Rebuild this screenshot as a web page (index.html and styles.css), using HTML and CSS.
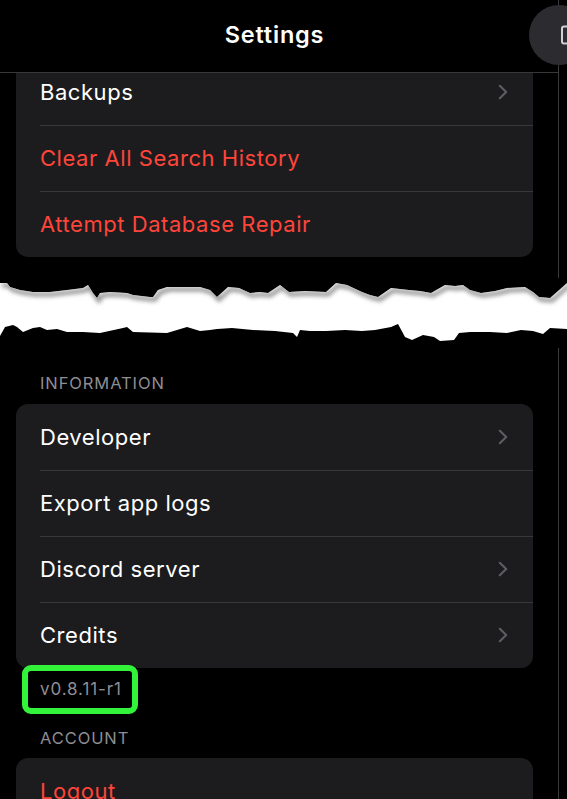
FILE: index.html
```html
<!DOCTYPE html>
<html lang="en">
<head>
<meta charset="utf-8">
<title>Settings</title>
<link rel="stylesheet" href="styles.css">
</head>
<body>
<div class="page">
  <div class="pane pane-top">
    <header class="navbar"><h1 class="title">Settings</h1></header>
    <div class="scroll">
      <div class="card card-first">
        <div class="row"><span class="label">Backups</span><svg class="chev" viewBox="0 0 10 16"><path d="M1.8 1.8 L8.2 8 L1.8 14.2"/></svg></div>
        <div class="row"><span class="label danger">Clear All Search History</span></div>
        <div class="row"><span class="label danger">Attempt Database Repair</span></div>
      </div>
    </div>
  </div>

  <svg class="torn" viewBox="0 0 567 70" preserveAspectRatio="none">
    <defs>
      <clipPath id="paper">
        <path id="paperShape" d="M0 5 L7 5 L10 9 L20 12 L33 14 L50 14 L67 12 L83 10 L88 7 L93 15 L97 20 L100 15 L110 14 L127 15 L133 17 L150 19 L153 19 L158 12 L167 9 L187 9 L200 9 L210 12 L217 19 L228 9 L239 10 L250 15 L260 14 L268 15 L280 7 L289 14 L305 13 L326 14 L336 5 L347 7 L362 14 L370 17 L378 19 L391 10 L400 11 L409 12 L420 13 L431 15 L445 7 L455 8 L463 7 L470 12 L481 15 L495 13 L507 10 L525 9 L533 14 L539 19 L550 20 L558 13 L567 5 L567 51 L550 50 L543 56 L533 53 L521 52 L507 55 L490 54 L470 54 L459 55 L454 62 L440 63 L434 59 L423 57 L412 62 L405 59 L398 46 L391 49 L375 52 L362 53 L345 52 L326 53 L310 53 L300 52 L297 59 L293 55 L275 53 L253 52 L232 50 L217 51 L210 52 L200 53 L187 49 L167 55 L133 54 L127 49 L123 50 L100 55 L83 54 L67 54 L57 51 L47 52 L40 49 L33 50 L23 54 L17 49 L13 47 L5 49 L0 58 Z"/>
      </clipPath>
      <filter id="blur" x="-5%" y="-50%" width="110%" height="200%"><feGaussianBlur stdDeviation="2"/></filter>
    </defs>
    <use href="#paperShape" class="paper"/>
    <g clip-path="url(#paper)">
      <path class="shade" filter="url(#blur)" transform="translate(2 2.5)" d="M0 5 L7 5 L10 9 L20 12 L33 14 L50 14 L67 12 L83 10 L88 7 L93 15 L97 20 L100 15 L110 14 L127 15 L133 17 L150 19 L153 19 L158 12 L167 9 L187 9 L200 9 L210 12 L217 19 L228 9 L239 10 L250 15 L260 14 L268 15 L280 7 L289 14 L305 13 L326 14 L336 5 L347 7 L362 14 L370 17 L378 19 L391 10 L400 11 L409 12 L420 13 L431 15 L445 7 L455 8 L463 7 L470 12 L481 15 L495 13 L507 10 L525 9 L533 14 L539 19 L550 20 L558 13 L567 5"/>
    </g>
  </svg>

  <div class="pane pane-bottom">
    <section class="group">
      <h2 class="group-title">INFORMATION</h2>
      <div class="card">
        <div class="row"><span class="label">Developer</span><svg class="chev" viewBox="0 0 10 16"><path d="M1.8 1.8 L8.2 8 L1.8 14.2"/></svg></div>
        <div class="row"><span class="label">Export app logs</span></div>
        <div class="row"><span class="label">Discord server</span><svg class="chev" viewBox="0 0 10 16"><path d="M1.8 1.8 L8.2 8 L1.8 14.2"/></svg></div>
        <div class="row"><span class="label">Credits</span><svg class="chev" viewBox="0 0 10 16"><path d="M1.8 1.8 L8.2 8 L1.8 14.2"/></svg></div>
      </div>
      <p class="version"><span class="version-text">v0.8.11-r1</span></p>
    </section>
    <section class="group">
      <h2 class="group-title account-title">ACCOUNT</h2>
      <div class="card">
        <div class="row"><span class="label danger">Logout</span></div>
      </div>
    </section>
  </div>

  <div class="side-button"><svg viewBox="0 0 12 24"><rect x="3" y="3.5" width="14" height="17" rx="2"/></svg></div>
</div>
</body>
</html>
```

FILE: styles.css
```css
* { box-sizing: border-box; }
html, body { margin: 0; padding: 0; background: #000; }
body {
  font-family: Inter, "Noto Sans", "Liberation Sans", sans-serif;
  color: #fff;
  width: 567px;
  height: 799px;
  overflow: hidden;
}
.page {
  position: relative;
  width: 567px;
  height: 799px;
  overflow: hidden;
  display: flex;
  flex-direction: column;
}
.pane {
  width: 559px;
  border-right: 1px solid #3a3a3c;
}
.navbar {
  height: 73px;
  border-bottom: 1px solid #38383a;
  display: flex;
  align-items: center;
  justify-content: center;
  padding-right: 9px;
  padding-bottom: 3px;
}
.title {
  margin: 0;
  font-size: 23.5px;
  font-weight: 600;
  letter-spacing: 0.8px;
}
.scroll {
  height: 205px;
  overflow: hidden;
}
.card {
  margin: 0 25px 0 16px;
  background: #1c1c1e;
  border-radius: 12px;
  overflow: hidden;
}
.card-first {
  margin-top: -14px;
}
.row {
  height: 66px;
  display: flex;
  align-items: center;
  justify-content: space-between;
  padding: 0 25px 0 24px;
  position: relative;
}
.row + .row::before {
  content: "";
  position: absolute;
  left: 24px;
  right: 0;
  top: 0;
  height: 1px;
  background: #38383a;
}
.label {
  font-size: 22px;
  letter-spacing: 0.55px;
  color: #fff;
}
.label.danger { color: #ff453a; }
.chev {
  width: 10px;
  height: 16px;
  fill: none;
  stroke: #5c5c61;
  stroke-width: 2.2;
  stroke-linecap: round;
  stroke-linejoin: round;
}
.torn {
  display: block;
  width: 567px;
  height: 70px;
  flex: none;
}
.paper { fill: #fff; }
.shade {
  fill: none;
  stroke: #8f8f8f;
  stroke-width: 4;
}
.pane-bottom {
  flex: 1;
}
.group-title {
  margin: 0;
  padding: 25px 0 11px 40px;
  font-size: 16.5px;
  font-weight: 400;
  color: #8e8e93;
  letter-spacing: 0.9px;
  line-height: 20px;
}
.account-title {
  padding-top: 14px;
  padding-bottom: 10px;
}
.version {
  margin: 0;
  padding: 11px 0 0 40px;
  height: 46px;
  position: relative;
}
.version-text {
  font-size: 17px;
  color: #8e8e93;
  line-height: 20px;
  letter-spacing: 0.9px;
  position: relative;
  display: inline-block;
}
.version-text::after {
  content: "";
  position: absolute;
  left: -18px;
  right: -16px;
  top: -14px;
  bottom: -15px;
  border: 6px solid #33f23a;
  border-radius: 9px;
}
.side-button {
  position: absolute;
  left: 529px;
  top: 5px;
  width: 60px;
  height: 60px;
  border-radius: 50%;
  background: #2c2c30;
  overflow: hidden;
}
.side-button svg {
  position: absolute;
  left: 30px;
  top: 18px;
  width: 12px;
  height: 24px;
  fill: none;
  stroke: #d0d0d4;
  stroke-width: 2;
}
```
